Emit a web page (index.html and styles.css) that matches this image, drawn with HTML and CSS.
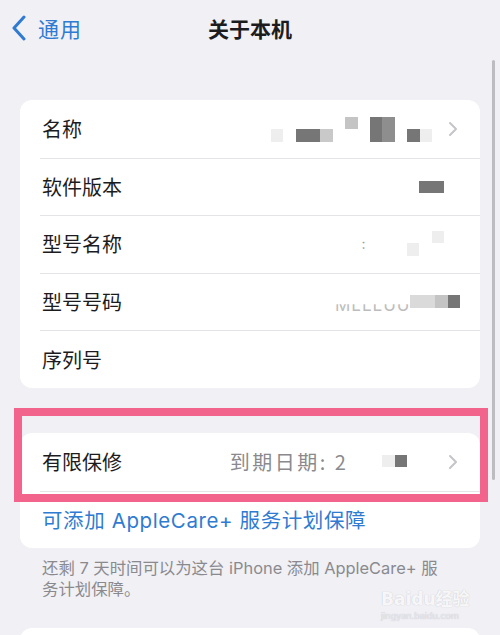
FILE: index.html
```html
<!DOCTYPE html>
<html lang="zh-CN">
<head>
  <meta charset="UTF-8">
  <title>关于本机</title>
  <link rel="stylesheet" href="styles.css">
</head>
<body>
  <div class="screen">
    <div class="nav-bar">
      <div class="nav-back">
        <svg class="back-icon" width="16" height="26" viewBox="0 0 16 26">
          <path d="M13 2 L3 13 L13 24" fill="none" stroke="#2f7bd2" stroke-width="3" stroke-linecap="round" stroke-linejoin="round"/>
        </svg>
        <span>通用</span>
      </div>
      <div class="nav-title">关于本机</div>
      <div></div>
    </div>

    <div class="card info-card">
      <div class="row">
        <span class="row-label">名称</span>
        <div class="row-value">
          <div class="mosaic mosaic-name">
            <i class="cell faint b"></i><i class="cell"></i><i class="cell dark b"></i><i class="cell dark b"></i><i class="cell light b"></i><i class="cell"></i><i class="cell mid t"></i><i class="cell"></i><i class="cell dark tb"></i><i class="cell grey tb"></i><i class="cell"></i><i class="cell dark b"></i><i class="cell faint b"></i>
          </div>
          <svg class="chevron" width="10" height="16" viewBox="0 0 10 16"><path d="M2 2 L8 8 L2 14" fill="none" stroke="#c5c5c9" stroke-width="2" stroke-linecap="round" stroke-linejoin="round"/></svg>
        </div>
      </div>
      <div class="row">
        <span class="row-label">软件版本</span>
        <div class="row-value no-chevron">
          <div class="mosaic">
            <i class="cell dark c"></i><i class="cell dark c"></i>
          </div>
        </div>
      </div>
      <div class="row">
        <span class="row-label">型号名称</span>
        <div class="row-value no-chevron">
          <span class="ghost-text">:</span>
          <div class="mosaic mosaic-model">
            <i class="cell"></i><i class="cell"></i><i class="cell"></i><i class="cell faint b"></i><i class="cell"></i><i class="cell faint t"></i>
          </div>
        </div>
      </div>
      <div class="row">
        <span class="row-label">型号号码</span>
        <div class="row-value code-value">
          <span class="ghost-code">MLLLUU</span>
          <div class="mosaic">
            <i class="cell pale c"></i><i class="cell pale c"></i><i class="cell mid c"></i><i class="cell dark c"></i>
          </div>
        </div>
      </div>
      <div class="row">
        <span class="row-label">序列号</span>
        <div class="row-value"></div>
      </div>
    </div>

    <div class="warranty-wrap">
      <div class="card warranty-card">
        <div class="row">
          <span class="row-label">有限保修</span>
          <div class="row-value">
            <span class="expire-text">到期日期: 2</span>
            <div class="mosaic mosaic-date">
              <i class="cell faint c"></i><i class="cell dark c"></i><i class="cell"></i><i class="cell"></i>
            </div>
            <svg class="chevron" width="10" height="16" viewBox="0 0 10 16"><path d="M2 2 L8 8 L2 14" fill="none" stroke="#c5c5c9" stroke-width="2" stroke-linecap="round" stroke-linejoin="round"/></svg>
          </div>
        </div>
        <div class="row link-row">
          <span class="link-text">可添加 AppleCare+ 服务计划保障</span>
        </div>
      </div>
      <div class="highlight-box"></div>
    </div>

    <p class="footnote">还剩 7 天时间可以为这台 iPhone 添加 AppleCare+ 服务计划保障。</p>

    <div class="card next-card"></div>

    <div class="watermark">
      <div class="wm-logo">Baidu经验</div>
      <div class="wm-url">jingyan.baidu.com</div>
    </div>

    <div class="scroll-indicator"></div>
  </div>
</body>
</html>
```

FILE: styles.css
```css
:root {
  --bg: #f0f0f5;
  --card: #ffffff;
  --text: #1c1c1e;
  --blue: #2f7bd2;
  --gray-text: #8a8a8e;
  --divider: #e4e4e8;
  --pink: #f2648c;
}

* {
  margin: 0;
  padding: 0;
  box-sizing: border-box;
}

body {
  background: var(--bg);
  font-family: "Inter", "Noto Sans CJK SC", sans-serif;
  color: var(--text);
}

.screen {
  position: relative;
  width: 500px;
  height: 635px;
  overflow: hidden;
}

/* Navigation */
.nav-bar {
  display: grid;
  grid-template-columns: 1fr auto 1fr;
  align-items: center;
  height: 56px;
}

.nav-back {
  display: flex;
  align-items: center;
  gap: 11px;
  padding-left: 11px;
  color: var(--blue);
  font-size: 21px;
  letter-spacing: 1px;
  font-family: "Noto Sans CJK SC", sans-serif;
}

.nav-title {
  font-size: 21px;
  font-weight: 600;
  font-family: "Noto Sans CJK SC", sans-serif;
}

/* Cards */
.card {
  background: var(--card);
  border-radius: 12px;
  margin: 0 20px;
}

.info-card {
  margin-top: 44px;
}

.row {
  display: flex;
  align-items: center;
  justify-content: space-between;
  height: 57.6px;
  padding: 0 22px;
  position: relative;
}

.row + .row::before {
  content: '';
  position: absolute;
  top: 0;
  left: 20px;
  right: 0;
  height: 1px;
  background: var(--divider);
}

.row-label {
  font-size: 20px;
  font-family: "Noto Sans CJK SC", sans-serif;
}

.row-value {
  display: flex;
  align-items: center;
}

.row-value.no-chevron {
  margin-right: 14px;
}

.chevron {
  margin-left: 16px;
}

/* Blurred values */
.mosaic {
  display: flex;
  height: 25px;
}

.cell {
  display: block;
  width: 12.4px;
  height: 25px;
}

.cell.t { background: linear-gradient(currentColor 50%, transparent 50%); }
.cell.b { background: linear-gradient(transparent 50%, currentColor 50%); }
.cell.c { background: linear-gradient(transparent 26%, currentColor 26%, currentColor 74%, transparent 74%); }
.cell.tb { background: currentColor; }

.cell.dark { color: #767676; }
.cell.grey { color: #8e8e8e; }
.cell.mid { color: #c4c4c4; }
.cell.light { color: #c9c9c9; }
.cell.pale { color: #dadada; }
.cell.faint { color: #eeeeee; }

.mosaic-name {
  margin-top: 1px;
}

.mosaic-model {
  margin-left: 4px;
}

.ghost-text {
  color: #9a9a9a;
  font-size: 14px;
}

.code-value {
  margin-right: -2px;
}

.ghost-code {
  color: #bdbdbd;
  font-size: 17px;
  letter-spacing: 1px;
  margin-top: 6px;
  clip-path: inset(48% 0 0 0);
}

/* Warranty */
.warranty-wrap {
  position: relative;
  margin-top: 45px;
}

.expire-text {
  color: var(--gray-text);
  font-size: 20px;
  letter-spacing: 2.5px;
  font-family: "Noto Sans CJK SC", sans-serif;
}

.mosaic-date {
  margin-left: 34px;
}

.mosaic-date + .chevron {
  margin-left: 16px;
}

.link-text {
  color: var(--blue);
  font-size: 20.5px;
  font-family: "Inter", "Noto Sans CJK SC", sans-serif;
  letter-spacing: 0.6px;
}

.highlight-box {
  position: absolute;
  left: 14px;
  top: -25px;
  width: 474px;
  height: 94px;
  border: 8px solid var(--pink);
}

.footnote {
  padding: 10px 48px 0 42px;
  font-size: 16.4px;
  line-height: 21px;
  color: var(--gray-text);
  font-family: "Inter", "Noto Sans CJK SC", sans-serif;
}

.next-card {
  margin-top: 28px;
  height: 40px;
}

/* Overlays */
.watermark {
  position: absolute;
  left: 381px;
  top: 588px;
  color: rgba(255, 255, 255, 0.9);
  text-shadow: 0 0 1px rgba(150, 150, 160, 0.6);
}

.wm-logo {
  font-size: 17px;
  font-weight: 700;
  font-family: "DejaVu Sans", "Noto Sans CJK SC", sans-serif;
  line-height: 22px;
}

.wm-url {
  font-size: 9px;
  line-height: 12px;
  color: rgba(235, 235, 240, 0.9);
}

.scroll-indicator {
  position: absolute;
  left: 492px;
  top: 60px;
  width: 3px;
  height: 420px;
  border-radius: 2px;
  background: #bcbcc1;
}
```
